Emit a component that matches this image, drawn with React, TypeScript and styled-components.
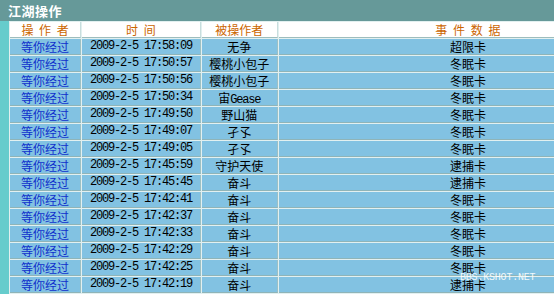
import React from "react";
import styled, { createGlobalStyle } from "styled-components";

const Global = createGlobalStyle`
  html, body { margin: 0; padding: 0; }
  body {
    background: #66cccc;
    overflow: hidden;
    width: 554px;
    height: 294px;
    font-family: "Noto Sans CJK SC", "Noto Sans", sans-serif;
  }
`;

const Page = styled.div`
  position: relative;
  width: 554px;
  height: 294px;
  overflow: hidden;
`;

const TitleBar = styled.div`
  height: 21px;
  background: #669999;
  color: #ffffff;
  font-weight: bold;
  font-size: 13px;
  line-height: 21px;
  padding-left: 8px;
  letter-spacing: 0.5px;
`;

const Body = styled.div`
  padding-left: 9px;
`;

const Table = styled.table`
  border-collapse: separate;
  border-spacing: 1px;
  background: #e2f0f0;
  table-layout: fixed;
  width: 650px;
`;

const Col = styled.col<{ $w: number }>`
  width: ${(p) => p.$w}px;
`;

const HeadCell = styled.th`
  background: #ffffff;
  height: 15px;
  padding: 0;
  border-bottom: 1px solid #9dbdbd;
  border-right: 1px solid #c8dede;
  color: #cc6600;
  font-weight: normal;
  font-size: 12px;
  line-height: 15px;
  word-spacing: 3px;
  text-align: center;
  white-space: nowrap;
  overflow: hidden;
`;

const Cell = styled.td<{ $kind?: "name" | "time" | "plain" }>`
  background: #82c2e2;
  height: 15px;
  padding: 0;
  border-bottom: 1px solid #8fb4b8;
  border-right: 1px solid #9cc0c4;
  text-align: center;
  white-space: nowrap;
  overflow: hidden;
  vertical-align: middle;
  font-size: 12px;
  line-height: 15px;
  color: ${(p) => (p.$kind === "name" ? "#1030cc" : "#000000")};
  font-family: ${(p) =>
    p.$kind === "time"
      ? `"Liberation Mono", "DejaVu Sans Mono", monospace`
      : `"Noto Sans CJK SC", "Noto Sans", sans-serif`};
  letter-spacing: ${(p) => (p.$kind === "time" ? "-1.2px" : "0")};
`;

const Inner = styled.div`
  height: 15px;
  line-height: 15px;
  overflow: hidden;
`;

const Mono = styled.span`
  font-family: "Liberation Mono", "DejaVu Sans Mono", monospace;
  letter-spacing: -1.2px;
  line-height: 1;
`;

const Watermark = styled.div`
  position: absolute;
  left: 460px;
  top: 272px;
  color: #ffffff;
  font-family: "Liberation Mono", "DejaVu Sans Mono", monospace;
  font-size: 10px;
  letter-spacing: -0.2px;
  opacity: 0.9;
`;

type Row = { time: string; target: React.ReactNode; event: string };

const rows: Row[] = [
  { time: "17:58:09", target: "无争", event: "超限卡" },
  { time: "17:50:57", target: "樱桃小包子", event: "冬眠卡" },
  { time: "17:50:56", target: "樱桃小包子", event: "冬眠卡" },
  { time: "17:50:34", target: <>宙<Mono>Gease</Mono></>, event: "冬眠卡" },
  { time: "17:49:50", target: "野山猫", event: "冬眠卡" },
  { time: "17:49:07", target: "孑孓", event: "冬眠卡" },
  { time: "17:49:05", target: "孑孓", event: "冬眠卡" },
  { time: "17:45:59", target: "守护天使", event: "逮捕卡" },
  { time: "17:45:45", target: "奋斗", event: "逮捕卡" },
  { time: "17:42:41", target: "奋斗", event: "冬眠卡" },
  { time: "17:42:37", target: "奋斗", event: "冬眠卡" },
  { time: "17:42:33", target: "奋斗", event: "冬眠卡" },
  { time: "17:42:29", target: "奋斗", event: "冬眠卡" },
  { time: "17:42:25", target: "奋斗", event: "冬眠卡" },
  { time: "17:42:19", target: "奋斗", event: "逮捕卡" },
];

export default function App() {
  return (
    <Page>
      <Global />
      <TitleBar>江湖操作</TitleBar>
      <Body>
        <Table>
          <colgroup>
            <Col $w={71} />
            <Col $w={118} />
            <Col $w={76} />
            <Col $w={378} />
          </colgroup>
          <thead>
            <tr>
              <HeadCell>操 作 者</HeadCell>
              <HeadCell>时 间</HeadCell>
              <HeadCell>被操作者</HeadCell>
              <HeadCell>事 件 数 据</HeadCell>
            </tr>
          </thead>
          <tbody>
            {rows.map((r, i) => (
              <tr key={i}>
                <Cell $kind="name"><Inner>等你经过</Inner></Cell>
                <Cell $kind="time"><Inner>2009-2-5 {r.time}</Inner></Cell>
                <Cell $kind="plain"><Inner>{r.target}</Inner></Cell>
                <Cell $kind="plain"><Inner>{r.event}</Inner></Cell>
              </tr>
            ))}
          </tbody>
        </Table>
      </Body>
      <Watermark>BBS.KSHOT.NET</Watermark>
    </Page>
  );
}
